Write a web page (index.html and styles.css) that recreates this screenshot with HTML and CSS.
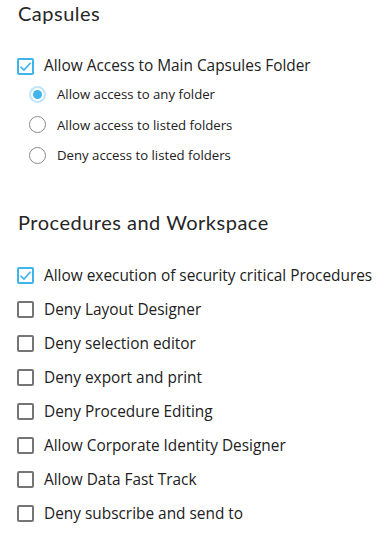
FILE: index.html
```html
<!DOCTYPE html>
<html>
<head>
<meta charset="utf-8">
<link rel="stylesheet" href="styles.css">
</head>
<body>
<div class="page">
  <h2 class="section-title">Capsules</h2>
  <div class="check-row main">
    <span class="box checked"><svg viewBox="0 0 13 13" width="13" height="13"><path d="M1.6 6.8 L5 10 L11.6 2.8" fill="none" stroke="#3db5eb" stroke-width="1.7"/></svg></span>
    <span class="label">Allow Access to Main Capsules Folder</span>
  </div>
  <div class="radio-list">
    <div class="radio-row"><span class="radio on"><span class="dot"></span></span><span class="rlabel">Allow access to any folder</span></div>
    <div class="radio-row"><span class="radio"></span><span class="rlabel">Allow access to listed folders</span></div>
    <div class="radio-row"><span class="radio"></span><span class="rlabel">Deny access to listed folders</span></div>
  </div>

  <h2 class="section-title second">Procedures and Workspace</h2>
  <div class="check-list">
    <div class="check-row">
      <span class="box checked"><svg viewBox="0 0 13 13" width="13" height="13"><path d="M1.6 6.8 L5 10 L11.6 2.8" fill="none" stroke="#3db5eb" stroke-width="1.7"/></svg></span>
      <span class="label">Allow execution of security critical Procedures</span>
    </div>
    <div class="check-row"><span class="box"></span><span class="label">Deny Layout Designer</span></div>
    <div class="check-row"><span class="box"></span><span class="label">Deny selection editor</span></div>
    <div class="check-row"><span class="box"></span><span class="label">Deny export and print</span></div>
    <div class="check-row"><span class="box"></span><span class="label">Deny Procedure Editing</span></div>
    <div class="check-row"><span class="box"></span><span class="label">Allow Corporate Identity Designer</span></div>
    <div class="check-row"><span class="box"></span><span class="label">Allow Data Fast Track</span></div>
    <div class="check-row"><span class="box"></span><span class="label">Deny subscribe and send to</span></div>
  </div>
</div>
</body>
</html>
```
FILE: styles.css
```css
html, body {
  margin: 0;
  padding: 0;
  background: #ffffff;
}
.page {
  padding: 0 0 0 17px;
  color: #212121;
  font-family: "Open Sans", "Noto Sans", sans-serif;
}
.section-title {
  margin: 0;
  font-family: Lato, "Noto Sans", sans-serif;
  font-weight: 400;
  font-size: 20px;
  line-height: 26px;
  padding-left: 1px;
  letter-spacing: 0.5px;
  color: #262626;
}
.section-title.second {
  margin-top: 38px;
}
.check-row {
  display: flex;
  align-items: center;
  height: 34px;
}
.check-row.main {
  margin-top: 25px;
  height: 30px;
}
.check-list {
  margin-top: 24px;
}
.box {
  width: 17px;
  height: 17px;
  box-sizing: border-box;
  border: 2px solid #757575;
  border-radius: 2px;
  display: flex;
  align-items: center;
  justify-content: center;
  flex: none;
}
.box.checked {
  border-color: #3db5eb;
}
.label {
  margin-left: 10px;
  font-size: 15.4px;
  line-height: 20px;
}
.radio-list {
  margin-top: -2px;
  padding-left: 12px;
}
.radio-row {
  display: flex;
  align-items: center;
  height: 30.5px;
}
.radio {
  width: 17px;
  height: 17px;
  box-sizing: border-box;
  border: 1px solid #8a8a8a;
  border-radius: 50%;
  display: flex;
  align-items: center;
  justify-content: center;
  flex: none;
}
.radio.on {
  border: 2px solid #bfe6f8;
}
.dot {
  width: 9px;
  height: 9px;
  border-radius: 50%;
  background: #3db5eb;
}
.rlabel {
  margin-left: 11px;
  font-size: 13.2px;
  line-height: 18px;
}
```
